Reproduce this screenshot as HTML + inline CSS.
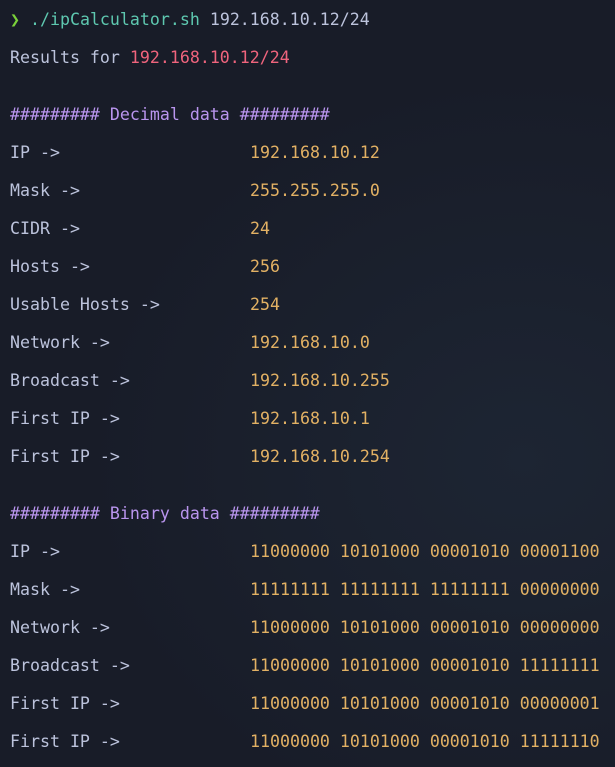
<!DOCTYPE html>
<html><head><meta charset="utf-8"><style>
html,body{margin:0;padding:0}
body{width:615px;height:767px;overflow:hidden;background:#181c28;background-image:radial-gradient(ellipse at 85% 60%,#1d2533 0%,#181c28 60%);font-family:"DejaVu Sans Mono","Liberation Mono",monospace;font-size:16.6px;color:#bcc3dc;position:relative}
.l{position:absolute;left:10px;white-space:pre;line-height:20px;margin-top:1px}
.o{color:#e2b164}.p{color:#b995ee}.r{color:#ef647d}.g{color:#7ad13a}.c{color:#5ec8b0}
.v{position:absolute;left:240px}
</style></head><body>
<div class="l" style="top:9px"><span class="g">❯</span> <span class="c">./ipCalculator.sh</span> 192.168.10.12/24</div>
<div class="l" style="top:47px">Results for <span class="r">192.168.10.12/24</span></div>
<div class="l p" style="top:104px">######### Decimal data #########</div>
<div class="l" style="top:142px">IP -&gt;<span class="v o">192.168.10.12</span></div>
<div class="l" style="top:180px">Mask -&gt;<span class="v o">255.255.255.0</span></div>
<div class="l" style="top:218px">CIDR -&gt;<span class="v o">24</span></div>
<div class="l" style="top:256px">Hosts -&gt;<span class="v o">256</span></div>
<div class="l" style="top:294px">Usable Hosts -&gt;<span class="v o">254</span></div>
<div class="l" style="top:332px">Network -&gt;<span class="v o">192.168.10.0</span></div>
<div class="l" style="top:370px">Broadcast -&gt;<span class="v o">192.168.10.255</span></div>
<div class="l" style="top:408px">First IP -&gt;<span class="v o">192.168.10.1</span></div>
<div class="l" style="top:446px">First IP -&gt;<span class="v o">192.168.10.254</span></div>
<div class="l p" style="top:503px">######### Binary data #########</div>
<div class="l" style="top:541px">IP -&gt;<span class="v o">11000000 10101000 00001010 00001100</span></div>
<div class="l" style="top:579px">Mask -&gt;<span class="v o">11111111 11111111 11111111 00000000</span></div>
<div class="l" style="top:617px">Network -&gt;<span class="v o">11000000 10101000 00001010 00000000</span></div>
<div class="l" style="top:655px">Broadcast -&gt;<span class="v o">11000000 10101000 00001010 11111111</span></div>
<div class="l" style="top:693px">First IP -&gt;<span class="v o">11000000 10101000 00001010 00000001</span></div>
<div class="l" style="top:731px">First IP -&gt;<span class="v o">11000000 10101000 00001010 11111110</span></div>
</body></html>
